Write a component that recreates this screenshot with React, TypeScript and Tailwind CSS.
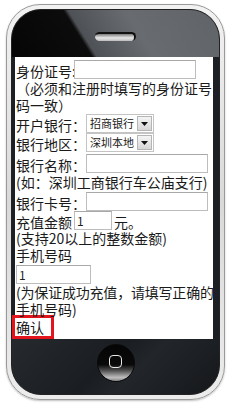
const font = "font-['Noto_Sans_CJK_SC','Noto_Sans',sans-serif]";

function TextInput({ w, value }: { w: string; value?: string }) {
  return (
    <div
      className={`${w} h-[19px] shrink-0 border border-[#bdbdbd] border-t-[#a8a8a8] bg-white pl-[2px] text-[12px] leading-[17px] text-[#222]`}
    >
      {value}
    </div>
  );
}

function FakeSelect({ value }: { value: string }) {
  return (
    <div className="flex h-[19px] w-[68px] shrink-0 items-center border border-[#c4c4c4] bg-white pl-[3px] pr-[1px]">
      <span className="flex-1 whitespace-nowrap text-[11px] leading-[17px] text-[#222]">{value}</span>
      <span className="flex h-[15px] w-[15px] items-center justify-center border border-[#b5b5b5] bg-[linear-gradient(#f4f4f4,#d6d6d6)]">
        <svg width="7" height="4" viewBox="0 0 7 4">
          <path d="M0 0h7L3.5 4z" fill="#111" />
        </svg>
      </span>
    </div>
  );
}

function Row({ label, children, className = "" }: { label: string; children: React.ReactNode; className?: string }) {
  return (
    <div className={`flex h-[19px] items-center ${className}`}>
      <span className="shrink-0 whitespace-nowrap pt-[3px]">{label}</span>
      {children}
    </div>
  );
}

export default function App() {
  return (
    <div className={`h-[406px] w-[230px] overflow-hidden bg-white pl-[6px] pt-[4px] ${font}`}>
      <div className="h-[396px] w-[219px] rounded-[34px] border border-[#9a9a9a] bg-[linear-gradient(180deg,#f2f2f2,#d9d9d9_50%,#ececec)] p-[4px] shadow-[0_1px_2px_rgba(0,0,0,0.25)]">
        <div className="flex h-full flex-col overflow-hidden rounded-[30px] border border-[#222] bg-[#1c1f23]">
          {/* top bezel */}
          <div className="relative h-[47px] shrink-0 bg-[linear-gradient(58deg,#050505_0%,#0c0c0c_34%,#4e5155_36%,#686b6f_60%,#606367_100%)]">
            <div className="absolute left-[83px] top-[22px] h-[9px] w-[41px] rounded-full border-t-2 border-r-2 border-[#111] bg-[linear-gradient(180deg,#7a7a7a,#e6e6e6_55%,#bcbcbc)]" />
          </div>

          {/* screen */}
          <div className="ml-[3px] h-[282px] w-[198px] shrink-0 bg-white pl-[1px] text-[14px] leading-[17px] text-[#1a1a1a]">
            <Row label="身份证号:" className="mt-[3px]">
              <div className="-ml-[2px]">
                <TextInput w="w-[122px]" />
              </div>
            </Row>
            <div className="pt-[1px]">
              <div className="whitespace-nowrap">（必须和注册时填写的身份证号</div>
              <div>码一致）</div>
            </div>
            <Row label="开户银行：">
              <FakeSelect value="招商银行" />
            </Row>
            <Row label="银行地区：">
              <FakeSelect value="深圳本地" />
            </Row>
            <Row label="银行名称：" className="mt-[2px]">
              <TextInput w="w-[122px]" />
            </Row>
            <div className="mt-[1px] whitespace-nowrap">(如：深圳工商银行车公庙支行)</div>
            <Row label="银行卡号：" className="mt-[1px]">
              <TextInput w="w-[122px]" />
            </Row>
            <Row label="充值金额">
              <div className="ml-[2px]">
                <TextInput w="w-[38px]" value="1" />
              </div>
              <span className="pl-[2px] pt-[3px]">元。</span>
            </Row>
            <div>(支持20以上的整数金额)</div>
            <div>手机号码</div>
            <div className="mt-[1px]">
              <TextInput w="w-[75px]" value="1" />
            </div>
            <div>
              <div className="whitespace-nowrap tracking-[-0.2px]">(为保证成功充值，请填写正确的</div>
              <div>手机号码)</div>
            </div>
            <div className="-ml-[4px] -mt-[3px] flex h-[24px] w-[42px] items-center border-[3px] border-[#e3141c] pl-[1px]">
              确认
            </div>
          </div>

          {/* bottom bezel */}
          <div className="flex flex-1 items-start justify-center bg-[linear-gradient(135deg,#262a2f_0%,#1a1d21_45%,#22262b_60%,#15171a_100%)] pt-[5px]">
            <div className="relative flex h-[38px] w-[38px] items-center justify-center overflow-hidden rounded-full border border-[#0a0a0a] bg-[linear-gradient(180deg,#050505_0%,#0a0a0a_55%,#4a4a4a_70%,#bdbdbd_90%,#8a8a8a_100%)]">
              <div className="mb-[4px] h-[13px] w-[13px] rounded-[4px] border-[1.5px] border-[#e8e8e8]" />
            </div>
          </div>
        </div>
      </div>
    </div>
  );
}
